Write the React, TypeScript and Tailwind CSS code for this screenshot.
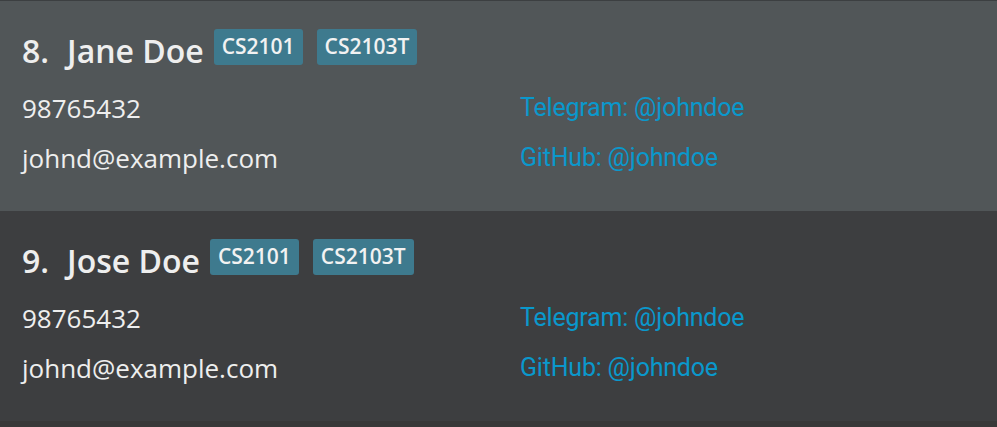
const people = [
  { index: 8, name: "Jane Doe", bg: "bg-[#515658]" },
  { index: 9, name: "Jose Doe", bg: "bg-[#3d3e40]" },
];

const tags = ["CS2101", "CS2103T"];

function PersonCard({ index, name, bg }: { index: number; name: string; bg: string }) {
  return (
    <div className={`${bg} h-[210px] pl-[22px] pt-[27px]`}>
      <div className="flex items-center h-[38px]">
        <div className="flex mt-[7px] text-[32px] leading-[40px] font-semibold text-[#eeeeee] font-['Open_Sans',sans-serif]">
          <span>{index}.</span>
          <span className="ml-[18px]">{name}</span>
        </div>
        <div className="flex gap-[14px] ml-[10px]">
          {tags.map((t) => (
            <span
              key={t}
              className="h-[36px] px-[8px] flex items-center rounded-[3px] bg-[#3e7a8e] text-[21px] font-semibold text-[#f2f2f2] font-['Open_Sans',sans-serif]"
            >
              {t}
            </span>
          ))}
        </div>
      </div>
      <div className="grid grid-cols-[498px_1fr] mt-[17px]">
        <div className="text-[26px] leading-[50px] text-[#eeeeee] font-['Open_Sans',sans-serif]">98765432</div>
        <div className="text-[25px] leading-[50px] tracking-[-0.2px] text-[#0a98cc] font-['Roboto',sans-serif]">Telegram: @johndoe</div>
        <div className="text-[26px] leading-[50px] text-[#eeeeee] font-['Open_Sans',sans-serif]">johnd@example.com</div>
        <div className="text-[25px] leading-[50px] tracking-[-0.2px] text-[#0a98cc] font-['Roboto',sans-serif]">GitHub: @johndoe</div>
      </div>
    </div>
  );
}

export default function App() {
  return (
    <div className="w-[997px] h-[427px] bg-[#383838] overflow-hidden">
      <div className="h-[1px] bg-[#3c3f41]" />
      {people.map((p) => (
        <PersonCard key={p.index} {...p} />
      ))}
    </div>
  );
}
